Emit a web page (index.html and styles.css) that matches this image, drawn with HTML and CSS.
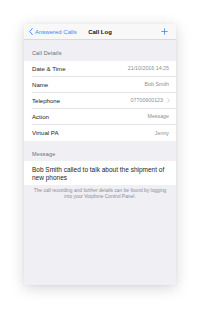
FILE: index.html
```html
<!DOCTYPE html>
<html>
<head>
<meta charset="utf-8">
<link rel="stylesheet" href="styles.css">
</head>
<body>
<div class="phone">
  <div class="nav">
    <div class="back">
      <svg class="chev" width="4" height="7" viewBox="0 0 4 7"><path d="M3.4 0.5 L0.7 3.5 L3.4 6.5" fill="none" stroke="#3a86f5" stroke-width="0.9" stroke-linecap="round" stroke-linejoin="round"/></svg>
      <span>Answered Calls</span>
    </div>
    <div class="title">Call Log</div>
    <div class="actions">
      <svg width="7" height="7" viewBox="0 0 7 7"><path d="M3.5 0.3 V6.7 M0.3 3.5 H6.7" stroke="#3a86f5" stroke-width="0.8"/></svg>
    </div>
  </div>
  <div class="section-header">Call Details</div>
  <div class="group">
    <div class="row"><span class="label">Date &amp; Time</span><span class="value">21/10/2016 14:25</span></div>
    <div class="row"><span class="label">Name</span><span class="value">Bob Smith</span></div>
    <div class="row"><span class="label">Telephone</span><span class="value">07700900123<svg class="disc" width="3" height="5" viewBox="0 0 3 5"><path d="M0.4 0.4 L2.5 2.5 L0.4 4.6" fill="none" stroke="#b8b8bd" stroke-width="0.6"/></svg></span></div>
    <div class="row"><span class="label">Action</span><span class="value">Message</span></div>
    <div class="row"><span class="label">Virtual PA</span><span class="value">Jenny</span></div>
  </div>
  <div class="section-header">Message</div>
  <div class="group">
    <div class="message">Bob Smith called to talk about the shipment of new phones</div>
  </div>
  <div class="footer">The call recording and further details can be found by logging into your Voipfone Control Panel.</div>
</div>
</body>
</html>
```
FILE: styles.css
```css
html, body {
  margin: 0;
  padding: 0;
  background: #ffffff;
}
body {
  width: 200px;
  height: 309px;
  overflow: hidden;
  font-family: "Liberation Sans", Arial, sans-serif;
}
.phone {
  width: 152px;
  height: 261px;
  margin: 24px 0 0 24px;
  background: #efeff4;
  box-shadow: 0 3px 14px rgba(0, 0, 0, 0.17), 0 0 2px rgba(0, 0, 0, 0.06);
  overflow: hidden;
}
.nav {
  height: 15px;
  background: #f8f8f9;
  border-bottom: 0.5px solid #d9d9de;
  display: grid;
  grid-template-columns: 1fr auto 1fr;
  align-items: center;
}
.back {
  display: flex;
  align-items: center;
  padding-left: 5px;
  color: #3a86f5;
  font-size: 6px;
}
.chev {
  margin-right: 2px;
}
.title {
  font-size: 6px;
  font-weight: bold;
  color: #111;
}
.actions {
  display: flex;
  justify-content: flex-end;
  padding-right: 8px;
}
.actions svg {
  display: block;
}
.section-header {
  height: 20.5px;
  box-sizing: border-box;
  display: flex;
  align-items: flex-end;
  padding: 0 8px 4.5px;
  font-size: 5.5px;
  letter-spacing: 0.15px;
  color: #6d6d72;
}
.group {
  background: #ffffff;
}
.row {
  height: 16.1px;
  box-sizing: border-box;
  margin-left: 8px;
  padding-right: 7px;
  border-bottom: 0.5px solid #e4e4e8;
  display: flex;
  align-items: center;
  justify-content: space-between;
}
.row:last-child {
  border-bottom: none;
}
.label {
  font-size: 6.1px;
  color: #1c1c1e;
}
.value {
  font-size: 5.3px;
  color: #8e8e93;
  display: flex;
  align-items: center;
}
.disc {
  margin-left: 3.5px;
  margin-right: -0.5px;
}
.message {
  padding: 4.5px 7px 3.5px 8px;
  font-size: 6.5px;
  line-height: 8px;
  color: #1c1c1e;
}
.footer {
  padding: 3px 8px 0;
  font-size: 4.9px;
  line-height: 6px;
  text-align: center;
  color: #8e8e93;
}
```
